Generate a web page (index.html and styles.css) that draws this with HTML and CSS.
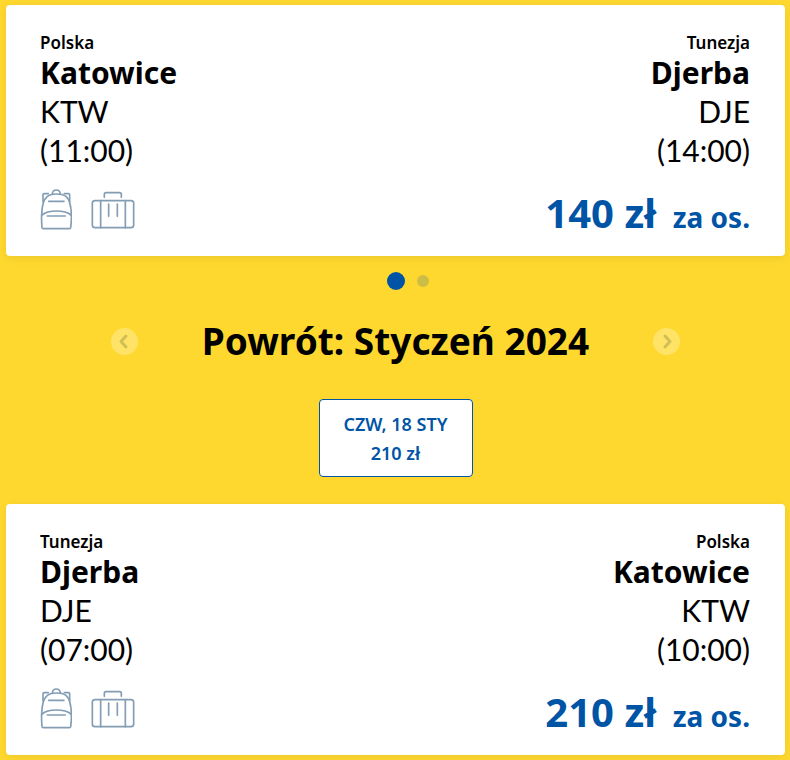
FILE: index.html
```html
<!DOCTYPE html>
<html lang="pl">
<head>
    <meta charset="UTF-8">
    <meta name="viewport" content="width=device-width, initial-scale=1.0">
    <title>Loty: Katowice - Djerba</title>

    <link rel="stylesheet" href="styles.css">
</head>
<body>
    <!-- Ikony bagażu -->
    <svg class="sprite" aria-hidden="true">
        <symbol id="backpack" viewBox="30 24 96 126">
            <path d="M36 143 Q34 119 35 104 Q36 62 52 49 Q62 42 79 42 Q98 42 108 49 Q123 62 124 104 Q125 119 122 143 Q121 146 116 146 H42 Q37 146 36 143Z"/>
            <path d="M36 105 Q50 93 79 93 Q109 93 123 105"/>
            <path d="M67 42 Q68 30 79 30 Q90 30 91 42"/>
            <path d="M39 65 V44 Q39 41 43 41 L55 41 M119 65 V44 Q119 41 115 41 L103 41"/>
            <path d="M56 64 H102 M52 108 H106"/>
        </symbol>
        <symbol id="suitcase" viewBox="183 24 132 126">
            <rect x="187" y="62" width="124" height="81" rx="8"/>
            <path d="M212 62 V143 M286 62 V143"/>
            <path d="M223 52 V43 Q223 38 228 38 H269 Q274 38 274 43 V52"/>
            <path d="M236 72 V109 M262 72 V109"/>
        </symbol>
    </svg>

    <main class="flights">
        <article class="card">
            <div class="route">
                <div class="airport">
                    <span class="country">Polska</span>
                    <strong>Katowice</strong>
                    <span class="code">KTW</span>
                    <time>(11:00)</time>
                </div>
                <div class="airport arrival">
                    <span class="country">Tunezja</span>
                    <strong>Djerba</strong>
                    <span class="code">DJE</span>
                    <time>(14:00)</time>
                </div>
            </div>
            <div class="summary">
                <div class="luggage">
                    <svg class="backpack" aria-label="Plecak"><use href="#backpack"/></svg>
                    <svg class="suitcase" aria-label="Walizka"><use href="#suitcase"/></svg>
                </div>
                <p class="price">140 zł <small>za os.</small></p>
            </div>
        </article>

        <div class="dots">
            <button class="dot active" type="button" aria-label="Lot 1"></button>
            <button class="dot" type="button" aria-label="Lot 2"></button>
        </div>

        <div class="month">
            <button class="arrow" type="button" aria-label="Poprzedni miesiąc" disabled>
                <svg viewBox="0 0 27 27"><path d="M15 8 L10 13.5 L15 19"/></svg>
            </button>
            <h2>Powrót: Styczeń 2024</h2>
            <button class="arrow" type="button" aria-label="Następny miesiąc" disabled>
                <svg viewBox="0 0 27 27"><path d="M12 8 L17 13.5 L12 19"/></svg>
            </button>
        </div>

        <button class="date" type="button">
            <span>CZW, 18 STY</span>
            <span>210 zł</span>
        </button>

        <article class="card">
            <div class="route">
                <div class="airport">
                    <span class="country">Tunezja</span>
                    <strong>Djerba</strong>
                    <span class="code">DJE</span>
                    <time>(07:00)</time>
                </div>
                <div class="airport arrival">
                    <span class="country">Polska</span>
                    <strong>Katowice</strong>
                    <span class="code">KTW</span>
                    <time>(10:00)</time>
                </div>
            </div>
            <div class="summary">
                <div class="luggage">
                    <svg class="backpack" aria-label="Plecak"><use href="#backpack"/></svg>
                    <svg class="suitcase" aria-label="Walizka"><use href="#suitcase"/></svg>
                </div>
                <p class="price">210 zł <small>za os.</small></p>
            </div>
        </article>
    </main>
</body>
</html>
```
FILE: styles.css
```css
html{
    box-sizing: border-box;
    font-family: "Noto Sans", sans-serif;
    font-size: 16px;
}

*, *::after, *::before{
    box-sizing: inherit;
}

body{
    margin: 0;
    background-color: #ffd82f;
    color: #000;
}

button{
    font-family: inherit;
    padding: 0;
    border: 0;
    cursor: pointer;
}

svg{
    fill: none;
    stroke-linecap: round;
    stroke-linejoin: round;
}

.sprite{
    position: absolute;
    width: 0;
    height: 0;
}

.flights{
    display: flex;
    flex-direction: column;
    padding: 5px 5px 5px 6px;
}

.card{
    padding: 28px 35px 18px 34px;
    background-color: #fff;
    border-radius: 4px;
    box-shadow: 0 2px 10px rgba(0, 0, 0, .08);
}

.route,
.summary{
    display: flex;
    justify-content: space-between;
}

.airport{
    display: flex;
    flex-direction: column;
    font-size: 30px;
    line-height: 39px;
}

.airport strong{
    font-weight: 700;
}

.airport time,
.airport .code{
    font-family: Lato, sans-serif;
    font-weight: 400;
}

.airport .country{
    font-size: 17px;
    font-weight: 600;
    line-height: 20px;
}

.arrival{
    text-align: right;
}

.summary{
    align-items: flex-start;
    margin-top: 18px;
}

.luggage{
    display: flex;
    gap: 19px;
    stroke: #839db4;
    stroke-width: 5;
}

.backpack{
    width: 32px;
    height: 42px;
}

.suitcase{
    width: 44px;
    height: 42px;
}

.price{
    margin: 0;
    color: #0054a6;
    font-size: 40px;
    font-weight: 700;
    line-height: 50px;
}

.price small{
    margin-left: 6px;
    font-size: 28px;
    line-height: 28px;
}

.dots{
    display: flex;
    justify-content: center;
    align-items: center;
    gap: 12px;
    height: 18px;
    margin-top: 16px;
    padding-left: 24px;
}

.dot{
    width: 12px;
    height: 12px;
    border-radius: 50%;
    background-color: #0054a6;
    opacity: .2;
}

.dot.active{
    width: 18px;
    height: 18px;
    opacity: 1;
}

.month{
    display: flex;
    justify-content: space-between;
    align-items: center;
    margin-top: 26px;
    padding: 0 105px;
}

.month h2{
    margin: 0;
    font-size: 37px;
    font-weight: 700;
    line-height: 50px;
}

.arrow{
    width: 27px;
    height: 27px;
    border-radius: 50%;
    background-color: #ffe367;
}

.arrow svg{
    display: block;
    stroke: #d0bf55;
    stroke-width: 3;
}

.date{
    display: flex;
    flex-direction: column;
    align-self: center;
    justify-content: center;
    width: 154px;
    height: 78px;
    margin: 33px 0 27px;
    padding-top: 2px;
    border: 1px solid #0054a6;
    border-radius: 4px;
    background-color: #fff;
    color: #0054a6;
    font-size: 18px;
    font-weight: 600;
    line-height: 29px;
    text-align: center;
}
```
